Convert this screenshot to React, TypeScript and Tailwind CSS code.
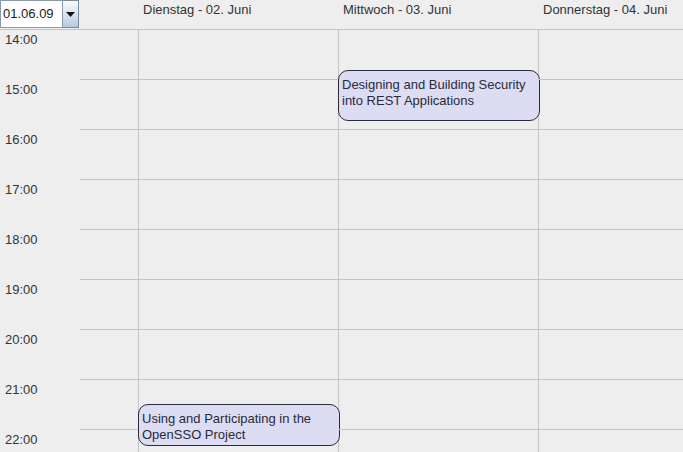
const hours = ["14:00", "15:00", "16:00", "17:00", "18:00", "19:00", "20:00", "21:00", "22:00"];

const days = ["Dienstag - 02. Juni", "Mittwoch - 03. Juni", "Donnerstag - 04. Juni"];

function DatePicker() {
  return (
    <div className="flex h-[28px] w-[79px]">
      <div className="flex w-[63px] items-center border border-[#8a99a6] bg-white pl-[2px] text-[13px] text-[#222]">
        01.06.09
      </div>
      <div className="flex w-[16px] items-center justify-center border border-l-0 border-[#7a8a99] bg-gradient-to-b from-[#fbfcfd] to-[#b6cbe0]">
        <svg width="9" height="5" viewBox="0 0 9 5">
          <path d="M0 0 L9 0 L4.5 5 Z" fill="#111" />
        </svg>
      </div>
    </div>
  );
}

export default function App() {
  return (
    <div
      className="h-[452px] w-[683px] overflow-hidden bg-[#eeeeee] text-[13px] text-[#333]"
      style={{ fontFamily: '"Liberation Sans", Arial, sans-serif' }}
    >
      <div className="flex h-[30px] border-b border-[#c4c4c4]">
        <div className="w-[139px] shrink-0">
          <DatePicker />
        </div>
        {days.map((day) => (
          <div key={day} className="w-[200px] shrink-0 pl-[4px] pt-[2px] leading-[16px]">
            {day}
          </div>
        ))}
      </div>
      <div className="flex">
        <div className="w-[80px] shrink-0">
          {hours.map((h) => (
            <div key={h} className="h-[50px] pl-[5px] pt-[2px] leading-[16px]">
              {h}
            </div>
          ))}
        </div>
        <div className="w-[59px] shrink-0 border-r border-[#c4c4c4]">
          {hours.map((h) => (
            <div key={h} className="h-[50px] border-b border-[#c4c4c4]" />
          ))}
        </div>
        {[0, 1, 2].map((d) => (
          <div key={d} className="relative w-[200px] shrink-0 border-r border-[#c4c4c4]">
            {hours.map((h) => (
              <div key={h} className="h-[50px] border-b border-[#c4c4c4]" />
            ))}
            {d === 0 && (
              <div className="absolute left-[-1px] top-[374px] h-[42px] w-[202px] rounded-[10px] border border-[#2a2a3a] bg-[#dcdcf3] pl-[3px] pt-[6px] leading-[16px] text-[#2a2a3a]">
                Using and Participating in the
                <br />
                OpenSSO Project
              </div>
            )}
            {d === 1 && (
              <div className="absolute left-[-1px] top-[40px] h-[51px] w-[202px] rounded-[10px] border border-[#2a2a3a] bg-[#dcdcf3] pl-[3px] pt-[6px] leading-[16px] text-[#2a2a3a]">
                Designing and Building Security
                <br />
                into REST Applications
              </div>
            )}
          </div>
        ))}
      </div>
    </div>
  );
}
